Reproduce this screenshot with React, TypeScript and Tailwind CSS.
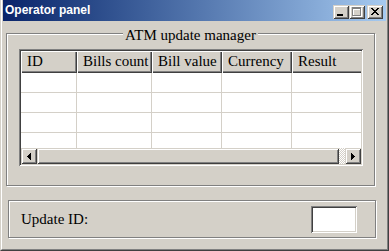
import React from 'react';

const raised = 'shadow-[inset_1px_1px_0_#d4d0c8,inset_-1px_-1px_0_#404040,inset_2px_2px_0_#fff,inset_-2px_-2px_0_#808080]';
const sunken = 'shadow-[inset_1px_1px_0_#808080,inset_-1px_-1px_0_#fff,inset_2px_2px_0_#404040,inset_-2px_-2px_0_#d4d0c8]';
const etched = 'border border-[#808080] shadow-[1px_1px_0_#fff,inset_1px_1px_0_#fff]';

const columns = [
    { label: 'ID', width: 56 },
    { label: 'Bills count', width: 75 },
    { label: 'Bill value', width: 70 },
    { label: 'Currency', width: 70 },
    { label: 'Result', width: 80 },
];

function TitleButton({ children, className = '' }: { children: React.ReactNode; className?: string }) {
    return (
        <div className={`w-[16px] h-[14px] bg-[#d4d0c8] ${raised} ${className}`}>
            <svg width="16" height="14" shapeRendering="crispEdges">{children}</svg>
        </div>
    );
}

function TitleBar() {
    const xPixels = [0, 1, 2, 3, 4, 5, 6];
    return (
        <div className="h-[21px] flex items-start bg-linear-to-r from-[#0a246a] to-[#a6caf0] shrink-0">
            <div className="flex-1 pl-[2px] pt-[3px] text-white font-bold text-[12px] leading-[15px] font-['Liberation_Sans',Arial,sans-serif]">
                Operator panel
            </div>
            <div className="flex mt-[5px] mr-[3px]">
                <TitleButton>
                    <rect x="4" y="9" width="6" height="2" fill="#000" />
                </TitleButton>
                <TitleButton>
                    <g fill="#fff">
                        <rect x="4" y="3" width="9" height="2" />
                        <rect x="4" y="3" width="1" height="9" />
                        <rect x="12" y="3" width="1" height="9" />
                        <rect x="4" y="11" width="9" height="1" />
                    </g>
                    <g fill="#808080">
                        <rect x="3" y="2" width="9" height="2" />
                        <rect x="3" y="2" width="1" height="9" />
                        <rect x="11" y="2" width="1" height="9" />
                        <rect x="3" y="10" width="9" height="1" />
                    </g>
                </TitleButton>
                <TitleButton className="ml-[2px]">
                    <g fill="#000">
                        {xPixels.map(i => (
                            <React.Fragment key={i}>
                                <rect x={4 + i} y={3 + i} width="2" height="1" />
                                <rect x={10 - i} y={3 + i} width="2" height="1" />
                            </React.Fragment>
                        ))}
                    </g>
                </TitleButton>
            </div>
        </div>
    );
}

function Arrow({ dir }: { dir: 'left' | 'right' }) {
    const cols = dir === 'left' ? [[3, 1], [2, 3], [1, 5], [0, 7]] : [[0, 7], [1, 5], [2, 3], [3, 1]];
    return (
        <div className={`w-[16px] h-[16px] bg-[#d4d0c8] ${raised} flex items-center justify-center shrink-0`}>
            <svg width="4" height="7" shapeRendering="crispEdges" className="ml-[-1px]">
                {cols.map(([x, h], i) => (
                    <rect key={i} x={i} y={(7 - h) / 2} width="1" height={h} fill="#000" />
                ))}
            </svg>
        </div>
    );
}

function ListView() {
    return (
        <div className={`w-[344px] h-[117px] p-[2px] bg-white ${sunken}`}>
            <div className="w-[340px] h-[113px] flex flex-col overflow-hidden">
                <div className="flex h-[22px] shrink-0 bg-[#d4d0c8]">
                    {columns.map(c => (
                        <div
                            key={c.label}
                            style={{ width: c.width }}
                            className="shrink-0 h-full flex items-center pl-[6px] pb-px shadow-[inset_1px_1px_0_#fff,inset_-1px_-1px_0_#404040,inset_-2px_-2px_0_#808080] whitespace-nowrap"
                        >
                            {c.label}
                        </div>
                    ))}
                </div>
                {[0, 1, 2].map(r => (
                    <div key={r} className="flex h-[20px] shrink-0 border-b border-[#d4d0c8]">
                        {columns.map(c => (
                            <div key={c.label} style={{ width: c.width }} className="shrink-0 h-full border-r border-[#d4d0c8]" />
                        ))}
                    </div>
                ))}
                <div className="flex flex-1">
                    {columns.map(c => (
                        <div key={c.label} style={{ width: c.width }} className="shrink-0 h-full border-r border-[#d4d0c8]" />
                    ))}
                </div>
                <div className="flex h-[16px] shrink-0">
                    <Arrow dir="left" />
                    <div className={`w-[302px] h-full bg-[#d4d0c8] shrink-0 ${raised}`} />
                    <div className="flex-1 h-full bg-[repeating-conic-gradient(#fff_0%_25%,#d4d0c8_0%_50%)] bg-[length:2px_2px]" />
                    <Arrow dir="right" />
                </div>
            </div>
        </div>
    );
}

export default function App() {
    return (
        <div className="w-[389px] h-[251px] bg-[#d4d0c8] border-l border-r border-b border-l-[#d4d0c8] border-r-[#404040] border-b-[#404040] text-[15px] text-black font-['Liberation_Serif','Times_New_Roman',serif] overflow-hidden">
            <div className="h-full border-l border-r border-b border-l-white border-r-[#808080] border-b-[#808080] px-px pb-px flex flex-col">
                <TitleBar />
                <div className={`relative ml-[3px] mt-[12px] w-[369px] h-[153px] shrink-0 ${etched}`}>
                    <div className="absolute inset-x-0 -top-[7px] flex justify-center">
                        <span className="px-[2px] bg-[#d4d0c8] leading-[16px]">ATM update manager</span>
                    </div>
                    <div className="ml-[12px] mt-[15px]">
                        <ListView />
                    </div>
                </div>
                <div className={`ml-[5px] mt-[14px] w-[368px] h-[38px] shrink-0 flex items-center justify-between pl-[12px] pr-[18px] ${etched}`}>
                    <span>Update ID:</span>
                    <div className={`w-[46px] h-[27px] bg-white ${sunken}`} />
                </div>
            </div>
        </div>
    );
}
